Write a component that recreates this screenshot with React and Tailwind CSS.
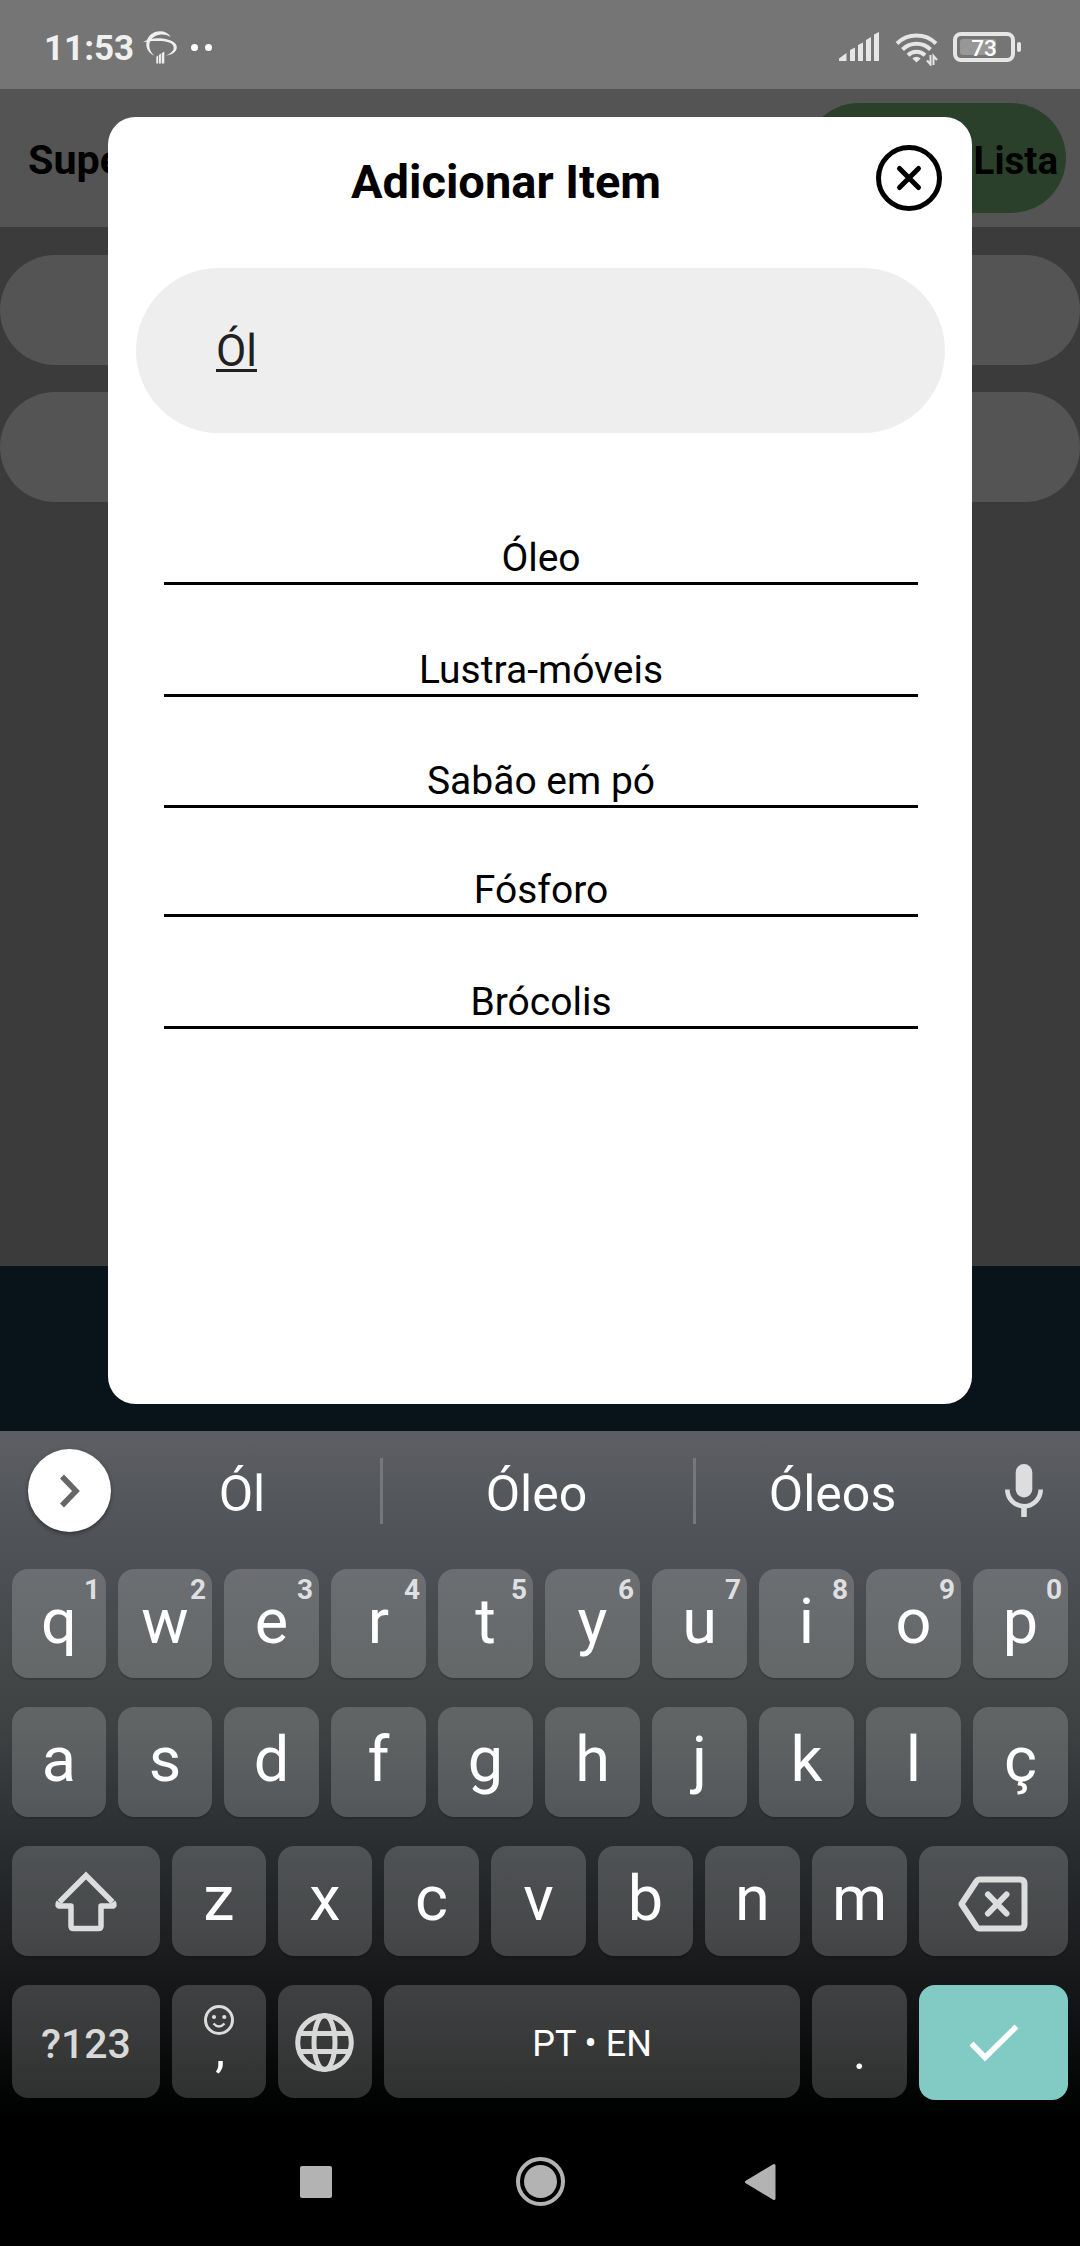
import React from "react";

const suggestions = [
  { label: "Óleo", space: "mt-[104px]" },
  { label: "Lustra-móveis", space: "mt-[64px]" },
  { label: "Sabão em pó", space: "mt-[63px]" },
  { label: "Fósforo", space: "mt-[61px]" },
  { label: "Brócolis", space: "mt-[64px]" },
];

const topRow = ["q", "w", "e", "r", "t", "y", "u", "i", "o", "p"];
const homeRow = ["a", "s", "d", "f", "g", "h", "j", "k", "l", "ç"];
const lowRow = ["z", "x", "c", "v", "b", "n", "m"];

function StatusBar() {
  return (
    <div className="flex h-[89px] items-start bg-[#757575] pl-[44px]">
      <span className="mt-[25px] w-[99px] text-[35px] leading-[48px] font-bold text-[#f0f0f0]">11:53</span>
      <svg className="mt-[31px] h-[33px] w-[34px]" viewBox="0 0 34 33" fill="#f0f0f0">
        <path d="M11.500 24.800C6.500 22.500 3.200 18.500 3.300 13 3.800 5 10 .3 17 .3c4.800 0 8.500 2 10.800 5.700C23.500 3.600 19.500 3 15.500 4 10 5.300 6.300 9 6.300 14.500c0 4.300 2 7.500 5.200 10.300z" />
        <path d="M0 11.300C4.500 8 12.500 6.800 19.500 7.600 28 8.600 33.800 11.800 33.800 16.200c0 4.600-5 7.900-11.300 8.400 4.800-1.800 8.200-4.500 8.200-7.900 0-4-5.200-6.200-12.200-6.600C12 9.700 5.500 10.200 0 11.300z" />
        <path d="M13.300 25.800l1.800-1.300V32.500h-1.800zM15.900 24l2-1.500v10h-2zM18.700 22.300l2.600-1.800v12h-2.600z" />
      </svg>
      <div className="mt-[44px] ml-[14px] flex gap-[7.500px]">
        <span className="size-[6.500px] rounded-full bg-white" />
        <span className="size-[6.500px] rounded-full bg-white" />
      </div>
      <div className="mt-[32px] mr-[59px] ml-auto flex items-start">
        <svg className="h-[29px] w-[41px]" viewBox="0 0 41 29" fill="#e6e6e6">
          <path d="M0 29V26.500L7.500 21V29zM11 29V18l5-2.500V29zM19 29V13l5-2.500V29zM27 29V8l5-3V29zM35 29V2.500L40 0V29z" />
        </svg>
        <svg className="ml-[15px] h-[34px] w-[44px]" viewBox="0 0 44 34" fill="none" stroke="#e6e6e6" strokeWidth="4">
          <path d="M2 11.500A28 28 0 0 1 41 11.500" />
          <path d="M7.500 17.500A20 20 0 0 1 35.500 17.500" />
          <path d="M13 23.200A12.500 12.500 0 0 1 30 23.200" />
          <path d="M17.300 26.500a6 6 0 0 1 8.400 0L21.500 30.500z" fill="#e6e6e6" stroke="none" />
          <path d="M35.500 23V32.500l-3.500-4M38.500 33V24l3.500 4" strokeWidth="2" />
        </svg>
        <div className="ml-[14px] flex items-center">
          <div className="relative flex h-[30px] w-[62px] items-center justify-center rounded-[8px] border-4 border-[#e6e6e6]">
            <span className="absolute top-[3px] left-[3px] h-[16px] w-[36px] rounded-[3px] bg-[#979797]" />
            <span className="relative mt-[2px] text-[22.500px] leading-[22px] font-medium text-white">73</span>
          </div>
          <span className="ml-[2px] h-[10px] w-[4px] rounded-[2px] bg-[#e6e6e6]" />
        </div>
      </div>
    </div>
  );
}

function Backdrop() {
  return (
    <div className="flex h-[1342px] flex-col bg-[#3b3b3b]">
      <div className="flex h-[138px] items-center justify-between bg-[#545454] pr-[14px] pl-[28px]">
        <span className="mt-[4px] text-[41.250px] leading-[48px] font-bold text-black">Super</span>
        <div className="flex h-[110px] w-[262px] items-center justify-end rounded-full bg-[#2a402a] pr-[8px]">
          <span className="mt-[6px] text-[38.500px] leading-[44px] font-bold text-black">Lista</span>
        </div>
      </div>
      <div className="mt-[28px] h-[110px] rounded-[55px] bg-[#545454]" />
      <div className="mt-[27px] h-[110px] rounded-[55px] bg-[#545454]" />
      <div className="mt-auto h-[165px] bg-[#08141a]" />
    </div>
  );
}

function Modal() {
  return (
    <div className="absolute top-[117px] left-[108px] h-[1287px] w-[864px] rounded-[27.500px] bg-white pt-[28px] pr-[27px] pl-[28px] text-black">
      <div className="flex h-[66px] items-start pr-[3px]">
        <h1 className="mt-[9px] flex-1 text-center text-[47px] leading-[56px] font-bold">Adicionar Item</h1>
        <svg className="size-[66px]" viewBox="0 0 66 66" fill="none" stroke="#000" strokeWidth="5" strokeLinecap="round">
          <circle cx="33" cy="33" r="30.500" />
          <path d="M23.500 23.500l19 19M42.500 23.500l-19 19" />
        </svg>
      </div>
      <div className="mt-[57px] flex h-[165px] items-center rounded-full bg-[#eee] pl-[80px]">
        <span className="text-[44px] leading-[52px] text-[#212121] underline decoration-[2.500px] underline-offset-[3px]">Ól</span>
      </div>
      <ul className="mr-[27px] ml-[28px]">
        {suggestions.map((s) => (
          <li key={s.label} className={s.space + " h-[48px] border-b-3 border-black text-center text-[39px] leading-[43px]"}>
            {s.label}
          </li>
        ))}
      </ul>
    </div>
  );
}

function Key({ className = "h-[110px]", children }) {
  return (
    <div className={"relative flex min-w-0 items-center justify-center rounded-[16px] bg-white/18 shadow-[0_2px_1px_rgba(0,0,0,0.15)] " + className}>
      {children}
    </div>
  );
}

function Letter({ className = "mt-[-5px]", children }) {
  return <span className={className + " text-[63px] leading-[74px] text-white"}>{children}</span>;
}

function SuggestionStrip() {
  return (
    <div className="flex h-[138px] items-start text-[50px] leading-[58px] text-white">
      <div className="mt-[18px] ml-[28px] flex size-[83px] items-center justify-center rounded-full bg-white shadow-[0_2px_4px_rgba(0,0,0,0.4)]">
        <svg className="h-[34px] w-[22px]" viewBox="0 0 22 34" fill="none" stroke="#666" strokeWidth="5.500">
          <path d="M3 2.500L17 17 3 31.500" />
        </svg>
      </div>
      <span className="mt-[34px] ml-[-7px] w-[276px] text-center">Ól</span>
      <span className="mt-[27px] h-[66px] w-[3px] bg-[#75777b]" />
      <span className="mt-[34px] w-[310px] pr-[3px] text-center">Óleo</span>
      <span className="mt-[27px] h-[66px] w-[3px] bg-[#75777b]" />
      <span className="mt-[34px] w-[276px] pr-[3px] text-center">Óleos</span>
      <svg className="mt-[33px] ml-[33px] h-[53px] w-[38px]" viewBox="0 0 38 53" fill="none" stroke="#dddddf">
        <rect x="10.700" y="0" width="16.600" height="33.500" rx="8.300" fill="#dddddf" stroke="none" />
        <path d="M2.300 25.500a16.700 16.700 0 0 0 33.400 0" strokeWidth="4.600" />
        <path d="M19 42V53" strokeWidth="5.600" />
      </svg>
    </div>
  );
}

function Keyboard() {
  return (
    <div className="h-[815px] bg-[linear-gradient(180deg,#5d5f65_0px,#4e5156_119px,#424646_250px,#3d4142_300px,#2c3033_400px,#1a1b1d_530px,#0f1011_600px,#020403_665px,#000_690px)]">
      <SuggestionStrip />
      <div className="flex flex-col px-[12px]">
        <div className="grid grid-cols-[94px_94px_repeat(8,95px)] gap-[12px]">
          {topRow.map((c, i) => (
            <Key key={c} className="h-[109px]">
              <Letter className="mt-[-3px]">{c}</Letter>
              <span className="absolute top-[4px] right-[6px] text-[28px] leading-[33px] font-bold text-[#dedfe0]">{(i + 1) % 10}</span>
            </Key>
          ))}
        </div>
        <div className="mt-[29px] grid grid-cols-[94px_94px_repeat(8,95px)] gap-[12px]">
          {homeRow.map((c) => (
            <Key key={c}>
              <Letter>{c}</Letter>
            </Key>
          ))}
        </div>
        <div className="mt-[29px] grid grid-cols-[148px_94px_94px_repeat(5,95px)_149px] gap-[12px]">
          <Key>
            <svg className="mt-[2px] h-[62px] w-[64px]" viewBox="0 0 64 62" fill="none" stroke="#dcdddd" strokeWidth="5.500" strokeLinejoin="round">
              <path strokeLinejoin="miter" d="M5.500 31L32 4.500 58.500 31" />
              <path d="M5 31Q2.500 35 6 35H17V55Q17 57.500 19.500 57.500H44.500Q47 57.500 47 55V35H58Q61.500 35 59 31" />
            </svg>
          </Key>
          {lowRow.map((c) => (
            <Key key={c}>
              <Letter>{c}</Letter>
            </Key>
          ))}
          <Key>
            <svg className="mt-[6px] mr-[2px] h-[56px] w-[70px]" viewBox="0 0 70 56" fill="none" stroke="#dcdddd" strokeWidth="6" strokeLinecap="round" strokeLinejoin="round">
              <path d="M21.500 3.500H62Q66.500 3.500 66.500 8V48Q66.500 52.500 62 52.500H21.500Q19.500 52.500 18 50L3.500 28 18 6Q19.500 3.500 21.500 3.500z" />
              <path d="M30 18.500l18.500 19M48.500 18.500l-18.500 19" />
            </svg>
          </Key>
        </div>
        <div className="mt-[29px] grid grid-cols-[148px_94px_94px_416px_95px_149px] items-start gap-[12px]">
          <Key className="h-[113px]">
            <span className="mt-[4px] text-[41px] leading-[48px] font-medium text-[#d8d8d8]">?123</span>
          </Key>
          <div className="flex h-[113px] flex-col items-center rounded-[16px] bg-white/18 pt-[20px]">
            <svg className="size-[30px] shrink-0" viewBox="0 0 30 30" fill="none" stroke="#dcdcdc" strokeWidth="3">
              <circle cx="15" cy="15" r="13.500" />
              <circle cx="10" cy="12" r="2.100" fill="#dcdcdc" stroke="none" />
              <circle cx="20.300" cy="12" r="2.100" fill="#dcdcdc" stroke="none" />
              <path d="M9.500 18.500q5.500 6 11 0" strokeWidth="2.500" />
            </svg>
            <span className="mt-[-15px] ml-[2px] text-[49.500px] leading-[58px] text-white">,</span>
          </div>
          <Key className="h-[113px]">
            <svg className="mt-[2px] mr-[1px] size-[59px]" viewBox="0 0 59 59" fill="none" stroke="#d8d8d8" strokeWidth="5">
              <circle cx="29.500" cy="29.500" r="26.800" />
              <ellipse cx="29.500" cy="29.500" rx="10.500" ry="27" />
              <path d="M4 20.500H55M4 38.500H55" />
            </svg>
          </Key>
          <Key className="h-[113px]">
            <span className="mt-[4px] text-[36px] leading-[42px] text-white">PT • EN</span>
          </Key>
          <Key className="h-[113px]">
            <span className="mt-[20px] text-[49.500px] leading-[58px] text-white">.</span>
          </Key>
          <div className="flex h-[115px] items-center justify-center rounded-[16px] bg-[#81cbc4]">
            <svg className="h-[38px] w-[50px]" viewBox="0 0 50 38" fill="none" stroke="#fff" strokeWidth="5.500">
              <path d="M2.500 19.500L16 33.500 47.500 2.500" />
            </svg>
          </div>
        </div>
      </div>
      <div className="mt-[57px] flex h-[49px] items-center pl-[300px]">
        <div className="size-[32px] rounded-[2px] bg-[#b3b3b3]" />
        <div className="ml-[184px] flex size-[49px] items-center justify-center rounded-full border-4 border-[#b3b3b3]">
          <div className="size-[33px] rounded-full bg-[#b3b3b3]" />
        </div>
        <svg className="ml-[179px] h-[38px] w-[32px]" viewBox="0 0 32 38" fill="#b3b3b3" stroke="#b3b3b3" strokeWidth="3" strokeLinejoin="round">
          <path d="M2.500 19L30 2.500V35.500z" />
        </svg>
      </div>
    </div>
  );
}

export default function App() {
  return (
    <div className="relative h-[2246px] w-[1080px] overflow-hidden bg-black font-['Roboto',sans-serif]">
      <StatusBar />
      <Backdrop />
      <Modal />
      <Keyboard />
    </div>
  );
}
